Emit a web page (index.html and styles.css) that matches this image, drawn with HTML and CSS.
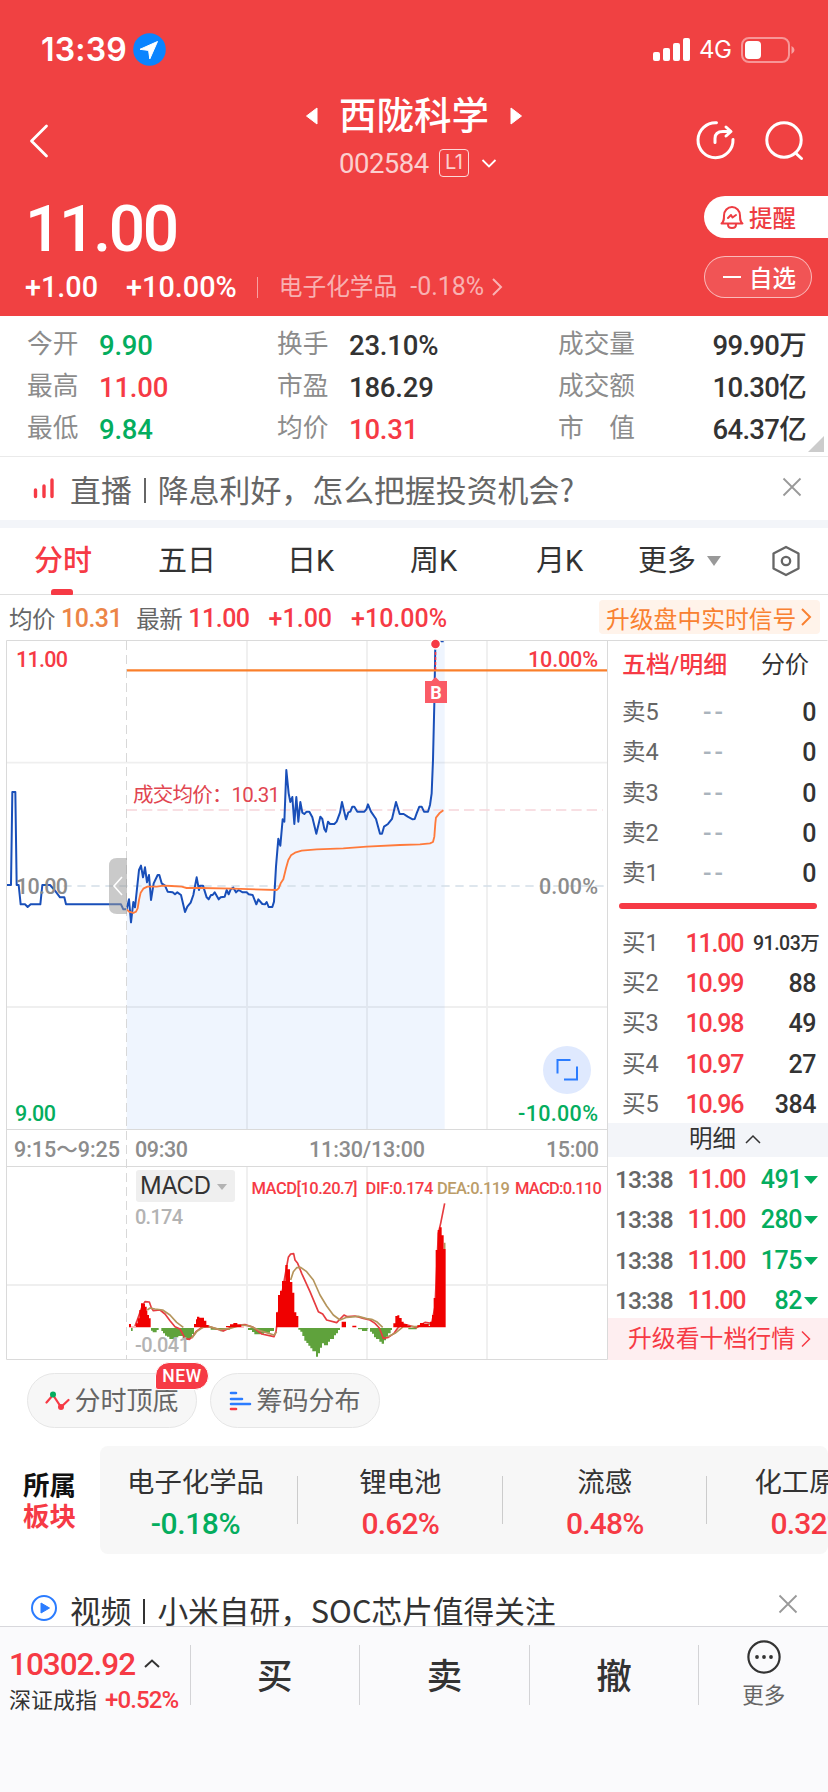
FILE: index.html
```html
<!DOCTYPE html>
<html lang="zh-CN">
<head>
    <meta charset="UTF-8">
    <meta name="viewport" content="width=device-width, initial-scale=1.0">
    <title>西陇科学 002584</title>
    <link rel="stylesheet" href="styles.css">
</head>
<body>
<header class="header">
    <div class="status">
        <span class="clock">13:39</span>
        <svg class="location" width="33" height="33" viewBox="0 0 33 33"><circle cx="16.500" cy="16.500" r="16.300" fill="#0a84ff"/><path d="M24.500 8.500 7 16.300l8.600 1.100 1.200 8.500z" fill="#fff" stroke="#fff" stroke-width="1" stroke-linejoin="round"/></svg>
        <svg class="signal" width="38" height="24" viewBox="0 0 38 24" fill="#fff"><rect x="0" y="14" width="7" height="9" rx="2"/><rect x="10" y="10" width="7" height="13" rx="2"/><rect x="20" y="5" width="7" height="18" rx="2"/><rect x="30" y="0" width="7" height="23" rx="2"/></svg>
        <span class="net">4G</span>
        <svg width="55" height="26" viewBox="0 0 55 26"><rect x="1" y="1" width="47" height="24" rx="7" fill="none" stroke="#fff" stroke-opacity=".45" stroke-width="2"/><rect x="4" y="4" width="16" height="18" rx="4" fill="#fff"/><path d="M50.500 9v8q3-1.500 3-4t-3-4z" fill="#fff" fill-opacity=".5"/></svg>
    </div>
    <div class="nav">
        <svg class="back" width="22" height="36" viewBox="0 0 22 36"><path d="M18.500 3 3.500 18l15 15" fill="none" stroke="#fff" stroke-width="2.800" stroke-linecap="round" stroke-linejoin="round"/></svg>
        <div class="title">
            <div class="name">
                <svg width="13" height="20" viewBox="0 0 13 20"><path d="M12 2v16L1.500 10z" fill="#fff" stroke="#fff" stroke-linejoin="round"/></svg>
                <h1>西陇科学</h1>
                <svg width="13" height="20" viewBox="0 0 13 20"><path d="M1 2v16l10.500-8z" fill="#fff" stroke="#fff" stroke-linejoin="round"/></svg>
            </div>
            <div class="code">
                <span>002584</span><i class="level">L1</i>
                <svg width="16" height="11" viewBox="0 0 16 11"><path d="m1.500 2 6.500 6.500L14.500 2" fill="none" stroke="#fff" stroke-width="1.800"/></svg>
            </div>
        </div>
        <div class="actions">
            <svg width="42" height="42" viewBox="0 0 42 42" fill="none" stroke="#fff" stroke-width="3" stroke-linecap="round" stroke-linejoin="round"><path d="M21.500 3.700A17.500 17.500 0 1 0 38 20.500M20 23.500v-4q0-7 8-7h7.500M31 8l5 4.500-5 4.500"/></svg>
            <svg width="42" height="42" viewBox="0 0 42 42" fill="none" stroke="#fff" stroke-width="3" stroke-linecap="round"><circle cx="20" cy="21" r="17.200"/><path d="m31.500 34 6 5.500"/></svg>
        </div>
    </div>
    <div class="quote">
        <div>
            <div class="price">11.00</div>
            <div class="change">
                <span>+1.00</span><span class="pct">+10.00%</span>
                <span class="industry">电子化学品<b>-0.18%</b></span>
                <svg width="12" height="18" viewBox="0 0 12 18"><path d="m2 1 8 8-8 8" fill="none" stroke="#fff" stroke-opacity=".6" stroke-width="2"/></svg>
            </div>
        </div>
        <div class="side">
            <button class="btn remind">
                <svg width="24" height="26" viewBox="0 0 24 26" fill="none" stroke="#ee3c42" stroke-width="2" stroke-linecap="round" stroke-linejoin="round"><path d="M1.500 19.500c2.500-2 2.500-4 2.500-8a8 8.500 0 0 1 16 0c0 4 0 6 2.500 8zM8 20.500q0 3.500 4 3.500t4-3.500M8 14l3-3 1.500 2.500L16 11"/></svg>提醒
            </button>
            <button class="btn watch"><i></i>自选</button>
        </div>
    </div>
</header>

<section class="stats">
    <dl><dt>今开</dt><dd class="down">9.90</dd><dt>最高</dt><dd class="up">11.00</dd><dt>最低</dt><dd class="down">9.84</dd></dl>
    <dl><dt>换手</dt><dd>23.10%</dd><dt>市盈</dt><dd>186.29</dd><dt>均价</dt><dd class="up">10.31</dd></dl>
    <dl class="last"><dt>成交量</dt><dd>99.90万</dd><dt>成交额</dt><dd>10.30亿</dd><dt>市　值</dt><dd>64.37亿</dd></dl>
</section>

<div class="notice">
    <svg width="22" height="22" viewBox="0 0 22 22" stroke="#f63a45" stroke-width="3.400" stroke-linecap="round"><path d="M2.500 13v6.500M11 9v10.500M19 3v16.500"/></svg>
    <p>直播<em></em>降息利好，怎么把握投资机会?</p>
    <svg class="close" width="20" height="20" viewBox="0 0 20 20"><path d="m1.500 1.500 17 17m0-17-17 17" stroke="#999" stroke-width="1.800"/></svg>
</div>

<nav class="tabs">
    <a class="active">分时</a><a>五日</a><a>日K</a><a>周K</a><a>月K</a>
    <a class="more">更多<svg width="16" height="12" viewBox="0 0 16 12"><path d="M1 1h14L8 11z" fill="#999"/></svg></a>
    <svg width="30" height="32" viewBox="0 0 30 32" fill="none" stroke="#666" stroke-width="2.300" stroke-linejoin="round"><path d="M15 2 27.500 8.500v15L15 30 2.500 23.500v-15z"/><circle cx="15" cy="16" r="4.200"/></svg>
</nav>

<div class="info">
    <span class="label">均价</span><span class="avg">10.31</span>
    <span class="label latest">最新</span><span class="up">11.00</span><span class="up diff">+1.00</span><span class="up diff">+10.00%</span>
    <a class="signalup">升级盘中实时信号<svg width="11" height="20" viewBox="0 0 11 20"><path d="m1 2 8 8-8 8" fill="none" stroke="#f98131" stroke-width="2"/></svg></a>
</div>

<main class="board">
    <svg class="chart" width="608" height="720" viewBox="0 640 608 720">
        <!-- grid -->
        <path d="M247 641v488M367 641v488M487 641v488M247 1167v192M367 1167v192M487 1167v192M7 762.700h600M7 1007h600M7 1285h600" class="grid"/>
        <!-- price line and area, drawn at 3x -->
        <g transform="translate(0 620) scale(.33333)" fill="none" stroke-linejoin="round">
            <path fill="#5f9af5" fill-opacity=".1" d="M380 1528V868L387 838 393 907 400 846 405 862 417 750 423 737 429 772 435 742 441 787 447 765 453 840 461 790 473 765 478 765 485 790 495 797 503 815 518 817 525 823 532 817 543 825 555 876 572 848 580 825 590 772 597 810 600 797 609 797 620 832 626 838 633 825 644 817 656 838 674 830 680 810 692 808 700 803 716 810 740 817 758 825 769 853 775 838 787 852 806 861 817 861 822 845 828 740 835 656 841 677 848 598 853 605 859 450 866 520 871 546 877 531 883 612 889 531 895 605 901 546 907 578 928 575 937 592 949 641 961 590 967 597 978 635 984 605 1003 612 1020 578 1026 546 1038 598 1045 577 1057 560 1072 575 1093 575 1104 553 1128 597 1140 641 1146 641 1152 620 1176 597 1188 546 1199 582 1223 590 1238 598 1244 597 1258 560 1265 560 1272 575 1284 575 1295 520 1299 420 1303 250 1306 62H1334V1528z"/>
            <path class="dash" stroke="#d3dee8" stroke-width="5" stroke-dasharray="25 17" d="M190 798H1822"/>
            <path class="dash" stroke="#f6d5da" stroke-width="5" stroke-dasharray="31 15" d="M380 570H1808"/>
            <path stroke="#194fb9" stroke-width="6" d="M20 795H33L37 516H46L50 795H56L62 853H75L83 861 92 853H121L127 795H150L165 812 180 832H193L198 853H363L370 868H380L387 838 393 907 400 846 405 862 417 750 423 737 429 772 435 742 441 787 447 765 453 840 461 790 473 765 478 765 485 790 495 797 503 815 518 817 525 823 532 817 543 825 555 876 562 860 572 848 580 825 590 772 597 810 600 797 609 797 620 832 626 838 633 825 638 825 644 817 656 838 662 832 674 830 680 810 686 823 692 808 700 803 708 817 716 810 728 817 740 817 746 823 758 825 769 853 775 838 787 852 795 853 800 846 806 861 817 861 822 845 828 740 835 656 841 677 848 598 853 605 859 450 866 520 871 546 877 531 883 612 889 531 895 605 901 546 907 578 913 582 920 575 928 575 937 592 949 641 961 590 967 597 973 627 978 635 984 605 990 612 1003 612 1010 605 1020 578 1026 546 1038 598 1045 577 1051 575 1057 560 1063 560 1072 575 1093 575 1099 568 1104 553 1113 575 1128 597 1140 641 1146 641 1152 620 1164 612 1176 597 1188 546 1199 582 1211 582 1223 590 1238 598 1244 597 1250 580 1258 560 1265 560 1272 575 1284 575 1290 555 1295 520 1299 420 1303 250 1306 72M1319 64H1331"/>
            <path stroke="#ff7a3b" stroke-width="5.500" d="M380 868 387 875 400 879 408 875 413 865 417 840 422 818 430 806 442 800 470 800 490 797 515 798 545 800 560 804 600 804 700 806 830 810 836 805 842 790 850 778 858 745 865 720 873 706 885 698 905 692 950 688 1030 685 1100 680 1200 675 1260 673 1290 670 1299 666 1303 650 1306 610 1308 593 1318 580 1330 571"/>
        </g>
        <path d="M127 670.300h480" stroke="#fa7f2b" stroke-width="2.200"/>
        <!-- frame -->
        <path d="M6.500 1359.500v-719h821M607.500 641v718.500H6.500M6.500 1129.500h601M6.500 1166.500h601" fill="none" stroke="#dadada"/>
        <path d="M126.500 641v718" stroke="#d8d8d8" stroke-dasharray="9 5"/>
        <!-- buy point -->
        <path d="M435.500 652v20" stroke="#f63a45" stroke-width="1.500" stroke-dasharray="3 2"/>
        <circle cx="435.500" cy="644" r="5" fill="#f63a45" stroke="#fff" stroke-width="1.400"/>
        <path d="M425 681h6.500l4-4 4 4h7.500v22h-22z" fill="#fa5b66"/>
        <text x="436" y="698.500" class="bmark">B</text>
        <g class="axis">
            <text x="16" y="667" class="up" textLength="52">11.00</text>
            <text x="528" y="667" class="up" textLength="70">10.00%</text>
            <text x="133" y="802" class="deal" textLength="147">成交均价：10.31</text>
            <text x="16" y="894" textLength="52">10.00</text>
            <text x="539" y="894" textLength="59">0.00%</text>
            <text x="15" y="1121" class="down" textLength="41">9.00</text>
            <text x="518" y="1121" class="down" textLength="80">-10.00%</text>
            <text x="14" y="1157" textLength="106">9:15～9:25</text>
            <text x="135" y="1157" textLength="53">09:30</text>
            <text x="309" y="1157" textLength="116">11:30/13:00</text>
            <text x="546" y="1157" textLength="53">15:00</text>
        </g>
        <path d="M127 858h-10q-8 0-8 8v40q0 8 8 8h10z" fill="#9a9a9a" fill-opacity=".52"/>
        <path d="m122 877-8 9 8 9" fill="none" stroke="#fff" stroke-width="1.600"/>
        <circle cx="567" cy="1070" r="24" fill="#dfe9fe"/>
        <path d="M570.500 1060h-13v13.500M564 1079.500h13v-13" fill="none" stroke="#2b7cff" stroke-width="2"/>
        <!-- macd -->
        <rect x="136" y="1170" width="99" height="32" rx="3" fill="#efefef"/>
        <text x="140" y="1193.500" class="kind" textLength="71">MACD</text>
        <path d="M217 1184h10l-5 6z" fill="#b3b3b3"/>
        <g class="macd">
            <text x="251.500" y="1193.500" class="up" textLength="106">MACD[10.20.7]</text>
            <text x="365.500" y="1193.500" class="up" textLength="68">DIF:0.174</text>
            <text x="437" y="1193.500" fill="#bb9c68" textLength="73">DEA:0.119</text>
            <text x="515" y="1193.500" class="up" textLength="87">MACD:0.110</text>
        </g>
        <g transform="translate(120 1180) scale(.33333)" stroke-linejoin="round">
            <path fill="#5fa23c" d="M33 444V453H38V444ZM93 444V452H98V457H110V450H116V444ZM124 444V453H129V460H135V467H141V470H148V477H165V472H175V468H188V476H200V480H210V474H216V462H222V444ZM272 444V449H300V454H312V449H330V444ZM384 444V450H396V456H403V463H420V461H432V458H450V453H462V444ZM535 444V449H541V455H547V468H553V482H559V489H565V497H571V505H577V514H588V530H594V520H600V503H606V490H612V496H624V485H630V477H642V466H648V460H654V450H660V444ZM714 444V448H726V453H742V446H745V444ZM750 444V455H756V461H762V472H768V477H778V485H785V491H792V481H798V470H804V460H812V450H816V444ZM865 444V448H890V444Z"/>
            <g fill="none" stroke-width="5">
                <path stroke="#e63c40" d="M45 438 50 425 66 380 75 365 88 366 94 383 100 392 120 390 135 402 150 422 165 440 180 447 195 475 208 478 218 470 228 455 245 442 268 440 310 453 345 436 375 434 400 442 425 462 462 470 468 455 475 400 500 260 505 232 512 222 521 221 525 240 533 250 545 280 570 335 595 395 608 402 620 420 650 428 672 405 682 410 705 408 730 415 750 420 765 430 778 444 790 475 805 472 822 460 835 442 850 432 890 443 915 427 935 430 945 380 955 160 962 130 974 70"/>
                <path stroke="#b5955c" d="M82 390 90 384 105 387 128 390 150 405 170 427 190 442M215 475 230 455 250 441 265 439 300 449 330 445 365 435 390 438 420 452 462 465 470 455M512 300 520 275 530 263 542 262 560 275 580 300 600 345 620 378 640 405 660 420 680 412 715 409 740 416 755 418 770 425 788 442M803 470 825 460 850 440 890 440 930 433M974 207V188"/>
            </g>
            <path fill="#f00000" d="M27 442V432H33V440H48V430H53V415H58V390H63V370H70V372H75V380H80V392H82V405H87V415H92V442ZM222 442V432H228V418H231V410H238V413H252V422H259V435H266V442ZM318 442V438H330V433H340V429H352V434H364V440H372V442ZM468 442V397H474V345H480V332H486V303H496V255H503V268H510V306H517V338H523V397H529V408H535V442ZM665 442V425H678V442ZM697 442V437H709V442ZM820 442V430H826V408H832V406H838V414H845V425H851V432H862V438H872V442ZM892 442V436H900V429H912V432H926V438H930V425H936V405H941V354H947V210H953V150H958V142H965V166H971V207H977V442Z"/>
        </g>
        <g class="scale">
            <text x="135" y="1224" textLength="48">0.174</text>
            <text x="135" y="1352" textLength="55">-0.041</text>
        </g>
    </svg>

    <aside class="book">
        <div class="booktabs"><b>五档/明细</b><span>分价</span></div>
        <ul class="sell">
            <li><span>卖5</span><i>--</i><b>0</b></li>
            <li><span>卖4</span><i>--</i><b>0</b></li>
            <li><span>卖3</span><i>--</i><b>0</b></li>
            <li><span>卖2</span><i>--</i><b>0</b></li>
            <li><span>卖1</span><i>--</i><b>0</b></li>
        </ul>
        <div class="ratio"></div>
        <ul class="buy">
            <li><span>买1</span><i>11.00</i><b class="small">91.03万</b></li>
            <li><span>买2</span><i>10.99</i><b>88</b></li>
            <li><span>买3</span><i>10.98</i><b>49</b></li>
            <li><span>买4</span><i>10.97</i><b>27</b></li>
            <li><span>买5</span><i>10.96</i><b>384</b></li>
        </ul>
        <div class="detail">明细<svg width="16" height="10" viewBox="0 0 16 10"><path d="m1 9 7-7 7 7" fill="none" stroke="#333" stroke-width="1.500"/></svg></div>
        <ul class="trades">
            <li><span>13:38</span><i>11.00</i><b>491</b></li>
            <li><span>13:38</span><i>11.00</i><b>280</b></li>
            <li><span>13:38</span><i>11.00</i><b>175</b></li>
            <li><span>13:38</span><i>11.00</i><b>82</b></li>
        </ul>
        <a class="upgrade">升级看十档行情<svg width="10" height="18" viewBox="0 0 10 18"><path d="m1 1.500 7.500 7.500L1 16.500" fill="none" stroke="#f63a45" stroke-width="1.500"/></svg></a>
    </aside>
</main>

<div class="tools">
    <a class="pill">
        <svg width="25" height="20" viewBox="0 0 25 20"><path d="M1.500 11.500 8 4l8 12 7.500-7" fill="none" stroke="#f63a45" stroke-width="2.200" stroke-linecap="round"/><circle cx="8" cy="3.500" r="3" fill="#04ad5e"/><circle cx="16" cy="16" r="3" fill="#f63a45"/></svg>分时顶底
        <span class="new">NEW</span>
    </a>
    <a class="pill">
        <svg width="23" height="20" viewBox="0 0 23 20" stroke-width="2.600" stroke-linecap="round"><path d="M2 2h5M2 8h11M2 13h19" stroke="#2b7cff"/><path d="M2 18h5" stroke="#f63a45"/></svg>筹码分布
    </a>
</div>

<section class="sectors">
    <h2>所属<br><span>板块</span></h2>
    <div class="cards">
        <div><p>电子化学品</p><b class="down">-0.18%</b></div>
        <div><p>锂电池</p><b class="up">0.62%</b></div>
        <div><p>流感</p><b class="up">0.48%</b></div>
        <div><p>化工原料</p><b class="up">0.32%</b></div>
    </div>
</section>

<div class="notice video">
    <svg width="28" height="28" viewBox="0 0 28 28"><circle cx="14" cy="14" r="12" fill="none" stroke="#2b7cff" stroke-width="2"/><path d="M11 9v10l8.500-5z" fill="#2b7cff" stroke="#2b7cff" stroke-linejoin="round"/></svg>
    <p>视频<em></em>小米自研，SOC芯片值得关注</p>
    <svg class="close" width="20" height="20" viewBox="0 0 20 20"><path d="m1.500 1.500 17 17m0-17-17 17" stroke="#999" stroke-width="1.800"/></svg>
</div>

<footer class="bottom">
    <div class="index">
        <div class="point">10302.92<svg width="16" height="9" viewBox="0 0 16 9"><path d="m1 8 7-6.500L15 8" fill="none" stroke="#333" stroke-width="2"/></svg></div>
        <div class="market">深证成指<span class="up">+0.52%</span></div>
    </div>
    <a>买</a><a>卖</a><a>撤</a>
    <div class="others">
        <svg width="36" height="36" viewBox="0 0 36 36" fill="#333"><circle cx="18" cy="18" r="15.600" fill="none" stroke="#333" stroke-width="2.200"/><circle cx="11" cy="18" r="1.900"/><circle cx="18" cy="18" r="1.900"/><circle cx="25" cy="18" r="1.900"/></svg>
        <span>更多</span>
    </div>
</footer>
</body>
</html>
```
FILE: styles.css
```css
* {
    box-sizing: border-box;
    margin: 0;
    padding: 0;
}
body {
    width: 828px;
    height: 1792px;
    overflow: hidden;
    background-color: #fff;
    color: #333;
    font-family: Roboto, "Noto Sans CJK SC", sans-serif;
}
svg {
    display: block;
    flex: none;
}
i {
    font-style: normal;
}
ul {
    list-style: none;
}
.up {
    color: #f63a45;
    fill: #f63a45;
}
.down {
    color: #04ad5e;
    fill: #04ad5e;
}

/* header */
.header {
    height: 316px;
    background-color: #f04142;
    color: #fff;
}
.status {
    display: flex;
    align-items: center;
    height: 66px;
    padding: 33px 32px 0 41px;
}
.clock {
    width: 92px;
    font: 600 32px/33px Inter, sans-serif;
    letter-spacing: 0.2px;
}
.signal {
    margin-left: auto;
}
.net {
    width: 50px;
    padding-left: 8px;
    font: 400 24px/33px Inter, sans-serif;
    letter-spacing: -0.5px;
}
.nav {
    display: grid;
    grid-template-columns: 200px 1fr 200px;
    height: 126px;
    padding-top: 20px;
}
.back {
    margin: 37px 0 0 28px;
}
.name {
    display: flex;
    align-items: center;
    justify-content: center;
    gap: 21px;
    height: 60px;
}
.name h1 {
    font-size: 37.500px;
    font-weight: 500;
    line-height: 60px;
}
.code {
    display: flex;
    align-items: center;
    height: 30px;
    margin-top: 2px;
    padding-left: 139px;
    font-size: 27.500px;
    letter-spacing: -0.5px;
    color: rgba(255, 255, 255, .75);
}
.level {
    width: 30px;
    height: 28px;
    margin: 0 12px 0 10px;
    border: 1.500px solid rgba(255, 255, 255, .8);
    border-radius: 4px;
    font: 20px/25px Inter, sans-serif;
    text-align: center;
}
.actions {
    display: flex;
    gap: 27px;
    padding: 33px 0 0 67px;
}
.quote {
    display: flex;
    justify-content: space-between;
    padding-left: 25px;
}
.price {
    height: 77px;
    font-size: 64px;
    font-weight: 500;
    line-height: 76px;
    letter-spacing: -2.300px;
}
.change {
    display: flex;
    align-items: center;
    height: 36px;
    font-size: 28.800px;
    font-weight: 500;
}
.pct {
    margin-left: 28px;
}
.industry {
    display: flex;
    align-items: center;
    height: 21px;
    margin: 0 7px 0 20px;
    padding-left: 21px;
    border-left: 1px solid rgba(255, 255, 255, .5);
    font-size: 23.700px;
    line-height: 20px;
    font-weight: 400;
    color: rgba(255, 255, 255, .6);
}
.industry b {
    margin-left: 13px;
    font-size: 25px;
    font-weight: 400;
}
.side {
    width: 124px;
    padding-top: 4px;
}
.btn {
    display: flex;
    align-items: center;
    height: 42px;
    font: 500 23.500px/42px "Noto Sans CJK SC", sans-serif;
}
.remind {
    width: 124px;
    padding-left: 16px;
    gap: 5px;
    border: none;
    border-radius: 21px 0 0 21px;
    background-color: #fff;
    color: #ee3c42;
}
.watch {
    width: 108px;
    margin-top: 18px;
    padding-left: 18px;
    gap: 8px;
    border: 1px solid rgba(255, 255, 255, .6);
    border-radius: 21px;
    background-color: rgba(255, 255, 255, .1);
    color: #fff;
}
.watch i {
    width: 18px;
    height: 2.500px;
    background-color: #fff;
}

/* key figures */
.stats {
    position: relative;
    display: grid;
    grid-template-columns: 250px 281px 248px;
    height: 141px;
    padding: 8px 0 0 27px;
    border-bottom: 1px solid #eaeaea;
}
.stats::after {
    content: "";
    position: absolute;
    right: 4px;
    bottom: 4px;
    border: 8px solid #ccc;
    border-top-color: transparent;
    border-left-color: transparent;
}
.stats dl {
    display: grid;
    grid-template-columns: 72px 1fr;
    grid-auto-rows: 42px;
    line-height: 43px;
}
.stats .last {
    grid-template-columns: 90px 1fr;
}
.stats dt {
    font-size: 25.700px;
    line-height: 41px;
    color: #8c8c8c;
}
.stats dd {
    font-size: 27.500px;
    font-weight: 500;
    letter-spacing: -0.2px;
}
.last dd {
    text-align: right;
}
.stats .last dd {
    letter-spacing: -0.7px;
}

/* notices */
.notice {
    display: flex;
    align-items: center;
    height: 71px;
    padding: 0 26px 2px 33px;
    border-bottom: 8px solid #f3f5f9;
    color: #666;
}
.notice p {
    margin-left: 15px;
    padding-top: 3px;
    font: 30.900px/50px "Noto Sans CJK SC", sans-serif;
    white-space: nowrap;
}
.notice em {
    display: inline-block;
    width: 2px;
    height: 25px;
    margin: 0 12px;
    background-color: currentColor;
    vertical-align: -1px;
}
.close {
    margin: 0 0 2px auto;
}

/* period tabs */
.tabs {
    display: flex;
    align-items: center;
    height: 67px;
    padding-left: 34px;
    border-bottom: 1px solid #dfdfdf;
    font-size: 29px;
    line-height: 67px;
}
.tabs a {
    position: relative;
    width: 124px;
    white-space: nowrap;
}
.tabs a:nth-child(2) {
    width: 129px;
}
.tabs a:nth-child(3) {
    width: 123px;
}
.tabs a:nth-child(4) {
    width: 126px;
}
.tabs a:nth-child(5) {
    width: 102px;
}
.tabs .active {
    font-weight: 500;
    color: #f63a45;
}
.active::after {
    content: "";
    position: absolute;
    left: 17px;
    bottom: 0;
    width: 22px;
    height: 6px;
    border-radius: 3px 3px 1px 1px;
    background-color: #f63a45;
}
.tabs .more {
    display: flex;
    align-items: center;
    gap: 10px;
    width: 133px;
}

.info {
    display: flex;
    align-items: center;
    height: 45px;
    padding: 1px 8px 0 9px;
    font-size: 25px;
    font-weight: 500;
    letter-spacing: -0.5px;
}
.label {
    margin-right: 6px;
    font-size: 23.500px;
    font-weight: 400;
    color: #666;
}
.avg {
    color: #ec8547;
}
.latest {
    margin-left: 14px;
}
.diff {
    margin-left: 19px;
    letter-spacing: 0;
}
.signalup {
    display: flex;
    align-items: center;
    justify-content: space-between;
    width: 221px;
    height: 34px;
    margin: -2px 0 0 auto;
    padding: 0 8px 0 7px;
    border-radius: 4px;
    background-color: #fff3ea;
    font-size: 23.800px;
    font-weight: 400;
    letter-spacing: 0;
    color: #f98131;
}

/* chart */
.board {
    display: flex;
    height: 720px;
}
.chart {
    overflow: visible;
}
.grid {
    stroke: #efefef;
    stroke-width: 1.800;
}
.axis {
    font-size: 21.500px;
    font-weight: 500;
    fill: #8c8c8c;
}
.axis .deal {
    font-size: 20.500px;
    font-weight: 400;
    fill: #e14550;
}
.macd {
    font-size: 16.500px;
    font-weight: 500;
}
.scale {
    font-size: 20px;
    font-weight: 500;
    fill: #b3b3b3;
}
.kind {
    font: 24px Inter, sans-serif;
    fill: #333;
}
.bmark {
    font: 700 18px Roboto, sans-serif;
    text-anchor: middle;
    fill: #fff;
}

/* order book */
.book {
    width: 220px;
    padding-top: 1px;
}
.booktabs {
    display: flex;
    justify-content: space-between;
    height: 50px;
    padding: 0 19px 0 14px;
    font-size: 24px;
    line-height: 48px;
}
.booktabs b {
    font-weight: 500;
    color: #f63a45;
}
.book li {
    display: grid;
    grid-template-columns: 54px 77px 1fr;
    align-items: center;
    height: 40.300px;
    padding: 3px 12px 0 14px;
    font-size: 25px;
    line-height: 37px;
    letter-spacing: -1.200px;
}
.book li span {
    font-size: 23.500px;
    letter-spacing: 0;
    color: #666;
}
.book li i {
    text-align: center;
    font-weight: 500;
    color: #f63a45;
}
.book li b {
    font-weight: 500;
    text-align: right;
    white-space: nowrap;
    letter-spacing: -0.500px;
}
.book li b.small {
    font-size: 19.500px;
}
.book .sell i {
    letter-spacing: 3px;
    color: #aab4bd;
}
.ratio {
    height: 6px;
    margin: 11px 11px 12px;
    border-radius: 3px;
    background-color: #f63a45;
}
.detail {
    display: flex;
    align-items: center;
    justify-content: center;
    gap: 9px;
    height: 34px;
    padding: 0 0 2px 26px;
    background-color: #f3f5f9;
    font-size: 23.500px;
    line-height: 32px;
}
.detail svg {
    margin-right: 12px;
}
.book .trades li {
    grid-template-columns: 64px 75px 1fr;
    padding: 6px 10px 0 7px;
    line-height: 34px;
}
.book .trades span {
    font-size: 24.500px;
    font-weight: 500;
    letter-spacing: -0.900px;
}
.book .trades b {
    display: flex;
    align-items: center;
    justify-content: flex-end;
    color: #04ad5e;
}
.book .trades b::after {
    content: "";
    margin-left: 2px;
    border: 7px solid transparent;
    border-top: 8px solid #04ad5e;
    border-bottom: none;
}
.upgrade {
    display: flex;
    align-items: center;
    justify-content: center;
    gap: 6px;
    height: 42px;
    padding-left: 3px;
    background-color: #feeef0;
    font-size: 23.900px;
    line-height: 40px;
    color: #f63a45;
}

/* tools */
.tools {
    display: flex;
    gap: 13px;
    padding: 13px 27px 0;
}
.pill {
    position: relative;
    display: flex;
    align-items: center;
    justify-content: center;
    gap: 4px;
    width: 170px;
    height: 55px;
    border: 1px solid #e6e6e6;
    border-radius: 28px;
    background-color: #f7f7f7;
    font-size: 26px;
    line-height: 52px;
    color: #666;
    white-space: nowrap;
}
.new {
    position: absolute;
    left: 127px;
    top: -12px;
    width: 54px;
    height: 28px;
    border: 1px solid #fff;
    border-radius: 14px 14px 14px 3px;
    background-color: #f63a45;
    font: 500 17.500px/27px Roboto, sans-serif;
    letter-spacing: 0.6px;
    text-align: center;
    color: #fff;
}

/* sectors */
.sectors {
    display: flex;
    height: 108px;
    margin-top: 18px;
}
.sectors h2 {
    width: 100px;
    padding: 22px 0 0 23px;
    font: 700 26.500px/31px "Noto Sans CJK SC", sans-serif;
    color: #111;
}
.sectors h2 span {
    color: #f63a45;
}
.cards {
    display: flex;
    width: 728px;
    overflow: hidden;
    border-radius: 8px;
    background-color: #f7f7f7;
}
.cards div {
    position: relative;
    flex: none;
    width: 204.500px;
    padding-top: 17px;
    text-align: center;
    white-space: nowrap;
}
.cards div:first-child {
    width: 198px;
    padding-right: 7px;
}
.cards div::after {
    content: "";
    position: absolute;
    right: 0;
    top: 30px;
    width: 1px;
    height: 48px;
    background-color: #ccc;
}
.cards p {
    font-size: 27.400px;
    line-height: 40px;
}
.cards b {
    font-size: 30px;
    font-weight: 500;
    line-height: 42px;
    letter-spacing: -0.4px;
}
.cards .up {
    letter-spacing: -0.8px;
}

.video {
    height: 72px;
    padding: 36px 30px 0 30px;
    border: none;
    color: #333;
}
.video p {
    margin-left: 12px;
    font-size: 30.700px;
}
.video .close {
    margin-bottom: 8px;
}

/* bottom bar */
.bottom {
    display: flex;
    position: relative;
    height: 166px;
    padding-top: 18px;
    border-top: 1px solid #d8d8dc;
    background-color: #fafafc;
}
.index {
    width: 191px;
    height: 60px;
    padding-left: 9px;
    border-right: 1px solid #d3d3d6;
}
.point {
    display: flex;
    align-items: center;
    gap: 9px;
    height: 38px;
    font-size: 31.500px;
    letter-spacing: -1px;
    font-weight: 500;
    color: #f63a45;
}
.point svg {
    margin-top: -2px;
}
.market {
    height: 33px;
    font-size: 22px;
    line-height: 34px;
    white-space: nowrap;
}
.market span {
    margin-left: 8px;
    font-size: 24px;
    font-weight: 500;
    letter-spacing: -0.9px;
}
.bottom a {
    width: 170px;
    height: 60px;
    border-right: 1px solid #d3d3d6;
    font: 500 35.500px/58px "Noto Sans CJK SC", sans-serif;
    text-align: center;
}
.others {
    display: flex;
    flex-direction: column;
    align-items: center;
    width: 129px;
    margin-top: -6px;
    font-size: 21.500px;
    line-height: 41px;
    color: #666;
}
```
